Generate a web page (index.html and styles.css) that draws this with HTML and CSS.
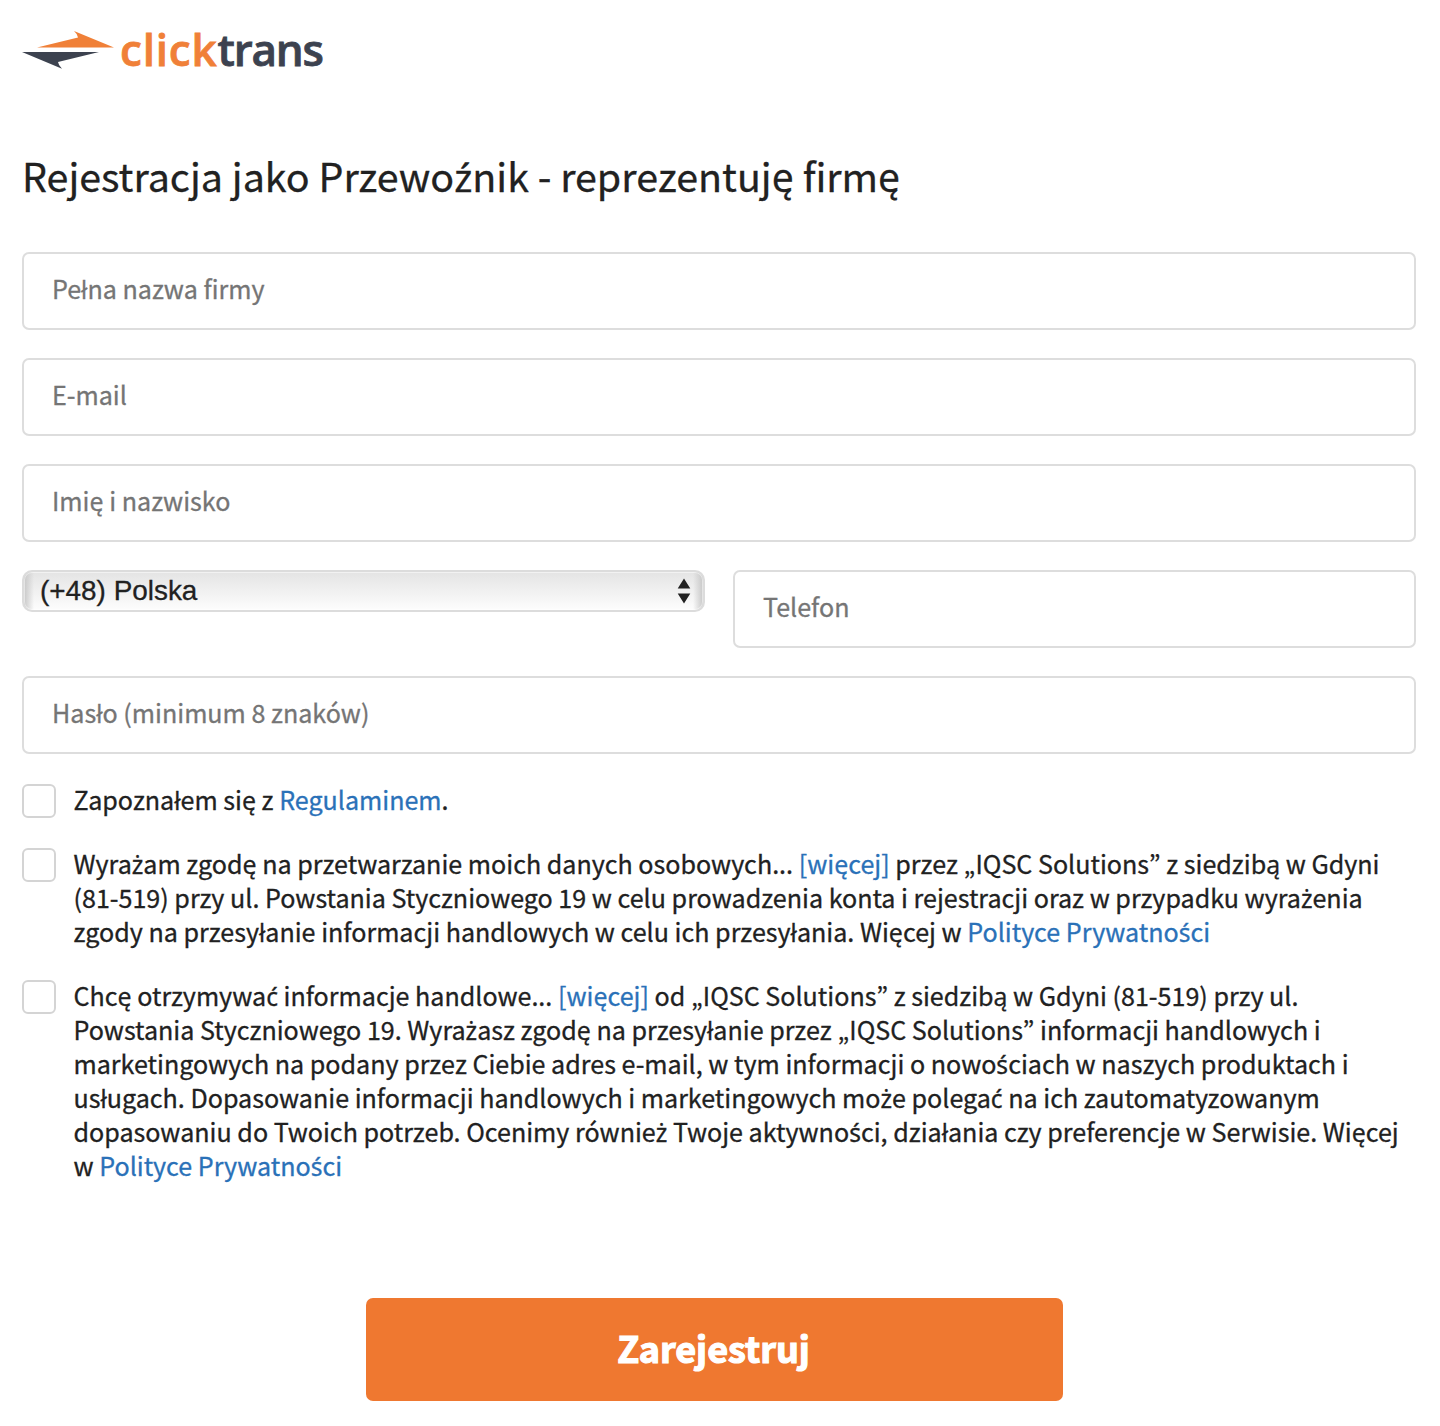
FILE: index.html
```html
<!DOCTYPE html>
<html lang="pl">
<head>
<meta charset="utf-8">
<title>Clicktrans – Rejestracja</title>
<link rel="stylesheet" href="styles.css">
</head>
<body>
<header class="header">
  <a class="logo" href="#" aria-label="clicktrans">
    <svg class="logo-mark" width="92" height="38" viewBox="0 0 92 38">
      <path fill="#f08038" d="M15 16.500 L56 6.500 Q55.500 3 52 0 L92 16.500 Z"/>
      <path fill="#3c424f" d="M77 21 L36 31 Q36.500 34.500 40 37.700 L0 21 Z"/>
    </svg>
    <span class="logo-text"><span class="logo-click">click</span>trans</span>
  </a>
</header>
<main>
  <h1 class="title">Rejestracja jako Przewo<span class="pl">ź</span>nik - reprezentuję firmę</h1>
  <form class="form">
    <input class="field" type="text" placeholder="Pełna nazwa firmy">
    <input class="field" type="text" placeholder="E-mail">
    <input class="field" type="text" placeholder="Imię i nazwisko">
    <div class="phone-row">
      <div class="prefix"><span>(+48) Polska</span>
        <svg width="14" height="26" viewBox="0 0 14 26"><path fill="#222" d="M7 0.500 L13.300 10.500 H0.700 Z M7 25.500 L0.700 15.500 H13.300 Z"/></svg>
      </div>
      <input class="field" type="text" placeholder="Telefon">
    </div>
    <input class="field" type="text" placeholder="Hasło (minimum 8 znaków)">
    <div class="consents">
      <div class="consent"><span class="box"></span><p>Zapoznałem się z <a href="#">Regulaminem</a>.</p></div>
      <div class="consent"><span class="box"></span><p>Wyra<span class="pl">ż</span>am zgodę na przetwarzanie moich danych osobowych... <a href="#">[więcej]</a> przez „IQSC Solutions” z siedzibą w Gdyni<br>(81-519) przy ul. Powstania Styczniowego 19 w celu prowadzenia konta i rejestracji oraz w przypadku wyra<span class="pl">ż</span>enia<br>zgody na przesyłanie informacji handlowych w celu ich przesyłania. Więcej w <a href="#">Polityce Prywatno<span class="pl">ś</span>ci</a></p></div>
      <div class="consent"><span class="box"></span><p>Chcę otrzymywa<span class="pl">ć</span> informacje handlowe... <a href="#">[więcej]</a> od „IQSC Solutions” z siedzibą w Gdyni (81-519) przy ul.<br>Powstania Styczniowego 19. Wyra<span class="pl">ż</span>asz zgodę na przesyłanie przez „IQSC Solutions” informacji handlowych i<br>marketingowych na podany przez Ciebie adres e-mail, w tym informacji o nowo<span class="pl">ś</span>ciach w naszych produktach i<br>usługach. Dopasowanie informacji handlowych i marketingowych mo<span class="pl">ż</span>e polega<span class="pl">ć</span> na ich zautomatyzowanym<br>dopasowaniu do Twoich potrzeb. Ocenimy równie<span class="pl">ż</span> Twoje aktywno<span class="pl">ś</span>ci, działania czy preferencje w Serwisie. Więcej<br>w <a href="#">Polityce Prywatno<span class="pl">ś</span>ci</a></p></div>
    </div>
    <button class="submit" type="button">Zarejestruj</button>
  </form>
</main>
</body>
</html>
```
FILE: styles.css
```css
* { box-sizing: border-box; }
body {
  margin: 0;
  padding: 31px 24px 25px 22px;
  background: #fff;
  color: #212121;
  font-family: "Noto Sans CJK JP", "Open Sans", sans-serif;
  font-size: 25.1px;
  -webkit-text-stroke: 0.3px currentColor;
}
a { color: #2a71b8; text-decoration: none; }
/* accented letters that the main face lacks */
.pl { font-family: "Noto Sans", sans-serif; font-size: 0.98em; line-height: 1; }
.header { height: 38px; }
.logo { display: flex; align-items: center; height: 38px; gap: 6px; color: #3c424f; }
.logo-text {
  padding-bottom: 2px; font-family: "Open Sans", sans-serif; font-weight: 600; font-size: 44px; line-height: 36px;
  letter-spacing: -1.2px; -webkit-text-stroke: 0.8px currentColor;
}
.logo-click { color: #f08038; letter-spacing: 0.8px; }
.title { margin: 74px 0 0; height: 64px; font-size: 39.4px; font-weight: 400; line-height: 64px; white-space: nowrap; }
.form { display: flex; flex-direction: column; gap: 28px; margin-top: 45px; }
.field {
  width: 100%; height: 78px; padding: 0 28px 6px; border: 2px solid #ddd; border-radius: 7px;
  font: inherit; color: inherit; background: #fff;
}
.field::placeholder { color: #757575; opacity: 1; }
.phone-row { display: grid; grid-template-columns: 1fr 1fr; gap: 28px; align-items: start; }
.prefix {
  display: flex; justify-content: space-between; align-items: center; height: 42px; padding: 0 12px 0 16px;
  border: 2px solid #dcdcdc; border-radius: 10px;
  background:
    linear-gradient(90deg, #c8c8c8, rgba(220, 220, 220, 0) 10px, rgba(220, 220, 220, 0) calc(100% - 10px), #c8c8c8),
    linear-gradient(#e4e4e4, #fdfdfd);
  box-shadow: inset 0 0 0 1px rgba(255, 255, 255, 0.5);
  font-family: "Liberation Sans", Arial, sans-serif; font-size: 27.9px;
}
.consents { display: flex; flex-direction: column; gap: 30px; margin-top: 2px; }
.consent { display: flex; align-items: flex-start; gap: 17.5px; }
.consent p { margin: -2px 0 2px; font-size: 25.08px; line-height: 34px; white-space: nowrap; }
.box { flex: none; width: 34px; height: 34px; border: 2px solid #d4d4d4; border-radius: 6px; }
.submit {
  width: 697px; height: 103px; margin: 86px 0 0 344px; padding: 0 2px 6px 0; border: 0; border-radius: 7px;
  background: #ef7830; color: #fff; font: inherit; font-size: 36px; font-weight: 700;
  -webkit-text-stroke: 1.2px currentColor;
}
```
